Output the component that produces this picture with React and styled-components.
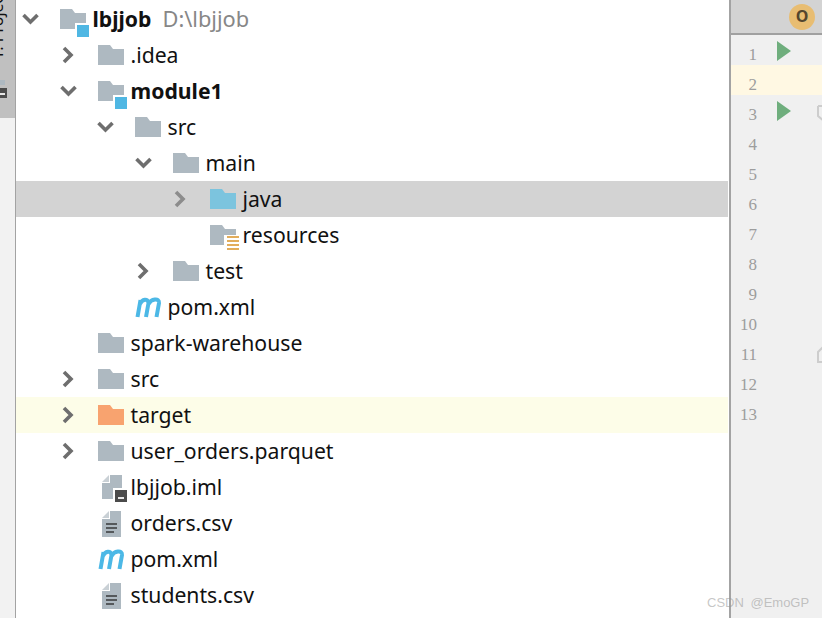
import styled, { createGlobalStyle } from "styled-components";

const GlobalStyle = createGlobalStyle`
  html, body {
    margin: 0;
    padding: 0;
    background: #fff;
  }
`;

const Page = styled.div`
  position: relative;
  display: grid;
  grid-template-columns: 16px 713px 93px;
  width: 822px;
  height: 618px;
  overflow: hidden;
  font-family: "Noto Sans", sans-serif;
`;

const SideBar = styled.div`
  position: relative;
  display: flex;
  flex-direction: column;
  border-right: 1px solid #a3a3a3;
  background: #f2f2f2;
  overflow: hidden;
`;
const SideTab = styled.div`
  height: 118px;
  background: #c0c0c0;
`;
const SideLabel = styled.span`
  position: absolute;
  left: -13px;
  top: -10px;
  writing-mode: vertical-rl;
  transform: rotate(180deg);
  font-size: 16px;
  line-height: 20px;
  color: #111;
  white-space: nowrap;
`;
const SideIcon = styled.svg`
  position: absolute;
  left: 0;
  top: 79px;
`;

const Tree = styled.div`
  padding-top: 1px;
  display: flex;
  flex-direction: column;
`;
const Row = styled.div`
  display: flex;
  align-items: center;
  height: 36px;
  flex: none;
  margin-right: 1px;
  padding-left: ${(p) => Math.round(p.$level * 37.5)}px;
  background: ${(p) => p.$bg || "transparent"};
`;
const ArrowSlot = styled.div`
  width: 44px;
  height: 100%;
  flex: none;
  display: flex;
  align-items: center;
  padding-left: 6px;
  box-sizing: border-box;
`;
const IconSlot = styled.div`
  position: relative;
  width: 26px;
  height: 26px;
  flex: none;
  margin-right: 6.5px;
`;
const Label = styled.span`
  font-size: 21.2px;
  line-height: 36px;
  color: #111;
  white-space: nowrap;
  font-weight: ${(p) => (p.$bold ? 700 : 400)};
`;
const Path = styled.span`
  margin-left: 11px;
  font-size: 21.8px;
  line-height: 36px;
  color: #878787;
  white-space: nowrap;
`;
const Glyph = styled.svg`
  position: absolute;
  left: 0;
  top: 0;
  overflow: visible;
`;

const Gutter = styled.div`
  display: flex;
  flex-direction: column;
  background: #f0f0f0;
  border-left: 2px solid #a3a3a3;
  box-sizing: border-box;
`;
const TabBar = styled.div`
  height: 33px;
  flex: none;
  display: flex;
  align-items: center;
  justify-content: flex-end;
  padding-right: 7px;
  background: #d3d3d3;
  border-bottom: 2px solid #a0a0a0;
`;
const Badge = styled.div`
  width: 26px;
  height: 26px;
  border-radius: 50%;
  background: #e8bd72;
  color: #54462e;
  font: 700 16px/25px "Noto Sans", sans-serif;
  text-align: center;
`;
const Line = styled.div`
  position: relative;
  height: 30px;
  flex: none;
  background: ${(p) => (p.$current ? "#fff8e3" : "transparent")};
`;
const LineNo = styled.span`
  position: absolute;
  right: 65px;
  top: 0;
  font: 17px/39px "Liberation Serif", serif;
  color: #9d9d9d;
`;
const Run = styled.svg`
  position: absolute;
  left: 46px;
  top: 6px;
`;
const Mark = styled.svg`
  position: absolute;
  left: 86px;
  top: 10px;
`;
const Watermark = styled.div`
  position: absolute;
  left: 707px;
  top: 594px;
  font: 13px/18px "Liberation Sans", sans-serif;
  color: rgba(150, 150, 150, 0.55);
  word-spacing: 3px;
  white-space: nowrap;
`;

function Arrow({ open, color = "#6e6e6e" }) {
  return open ? (
    <svg width="17" height="12" viewBox="0 0 17 12">
      <polyline points="1.5,2 8.5,9 15.5,2" fill="none" stroke={color} strokeWidth="3.6" />
    </svg>
  ) : (
    <svg width="30" height="18" viewBox="0 0 30 18">
      <polyline points="4,2 11,9 4,16" fill="none" stroke={color} strokeWidth="3.6" />
    </svg>
  );
}

function Folder({ color = "#aeb9c1", kind }) {
  return (
    <Glyph width="26" height="26" viewBox="0 0 26 26">
      <path d="M0 3 H12 L15 7 H26 V23 H0 Z" fill={color} />
      {kind === "module" && (
        <>
          <rect x="15" y="17" width="14" height="14" fill="#fff" />
          <rect x="17" y="19" width="12" height="12" fill="#4fb7e3" />
        </>
      )}
      {kind === "res" && (
        <>
          <rect x="14" y="13" width="16" height="16" fill="#fff" />
          <path d="M17 15 H29 M17 19 H29 M17 23 H29 M17 27 H29" stroke="#e2ad5c" strokeWidth="2.2" />
        </>
      )}
    </Glyph>
  );
}

function Maven() {
  return (
    <Glyph width="26" height="26" viewBox="0 0 26 26">
      <path
        d="M2.5 23 L5.5 6 M5 10 C7 5 13 4 13.5 9 L11 23 M13.5 10 C16 5 24.5 3.5 24 9 L21.5 23"
        fill="none"
        stroke="#4cb8e6"
        strokeWidth="4"
      />
    </Glyph>
  );
}

function FileDoc() {
  return (
    <Glyph width="26" height="26" viewBox="0 0 26 26">
      <path d="M4 8 L11 1 V8 Z" fill="#c9d0d5" />
      <path d="M4 9 H12 V1 H23 V27 H4 Z" fill="#aeb9c1" />
      <path d="M8 14 H19 M8 18 H19 M8 22 H16" stroke="#55595c" strokeWidth="2" />
    </Glyph>
  );
}

function FileIml() {
  return (
    <Glyph width="26" height="26" viewBox="0 0 26 26">
      <path d="M4 8 L11 1 V8 Z" fill="#c9d0d5" />
      <path d="M4 9 H12 V1 H24 V25 H4 Z" fill="#aeb9c1" />
      <rect x="15" y="14" width="14" height="14" fill="#fff" />
      <rect x="17" y="16" width="12" height="12" fill="#4b4b4b" />
      <rect x="20" y="23" width="6" height="2" fill="#e6e6e6" />
    </Glyph>
  );
}

const rows = [
  { level: 0, arrow: "open", icon: <Folder kind="module" />, text: "lbjjob", bold: true, path: "D:\\lbjjob" },
  { level: 1, arrow: "closed", icon: <Folder />, text: ".idea" },
  { level: 1, arrow: "open", icon: <Folder kind="module" />, text: "module1", bold: true },
  { level: 2, arrow: "open", icon: <Folder />, text: "src" },
  { level: 3, arrow: "open", icon: <Folder />, text: "main" },
  { level: 4, arrow: "closed", arrowColor: "#8c8c8c", icon: <Folder color="#7cc4de" />, text: "java", bg: "#d3d3d3" },
  { level: 4, icon: <Folder kind="res" />, text: "resources" },
  { level: 3, arrow: "closed", icon: <Folder />, text: "test" },
  { level: 2, icon: <Maven />, text: "pom.xml" },
  { level: 1, icon: <Folder />, text: "spark-warehouse" },
  { level: 1, arrow: "closed", icon: <Folder />, text: "src" },
  { level: 1, arrow: "closed", icon: <Folder color="#f8a36f" />, text: "target", bg: "#fdfde8" },
  { level: 1, arrow: "closed", icon: <Folder />, text: "user_orders.parquet" },
  { level: 1, icon: <FileIml />, text: "lbjjob.iml" },
  { level: 1, icon: <FileDoc />, text: "orders.csv" },
  { level: 1, icon: <Maven />, text: "pom.xml" },
  { level: 1, icon: <FileDoc />, text: "students.csv" },
];

const lineNumbers = [1, 2, 3, 4, 5, 6, 7, 8, 9, 10, 11, 12, 13];

function App() {
  return (
    <Page>
      <GlobalStyle />
      <SideBar>
        <SideTab />
        <SideLabel>1: Project</SideLabel>
        <SideIcon width="15" height="20" viewBox="0 0 15 20">
          <rect x="0" y="1" width="5" height="5" fill="#aeb9c1" />
          <rect x="0" y="9" width="7" height="10" fill="#4b4b4b" />
          <rect x="0" y="14" width="5" height="2" fill="#e6e6e6" />
        </SideIcon>
      </SideBar>
      <Tree>
        {rows.map((row, i) => (
          <Row key={i} $level={row.level} $bg={row.bg}>
            <ArrowSlot>
              {row.arrow && <Arrow open={row.arrow === "open"} color={row.arrowColor} />}
            </ArrowSlot>
            <IconSlot>{row.icon}</IconSlot>
            <Label $bold={row.bold}>{row.text}</Label>
            {row.path && <Path>{row.path}</Path>}
          </Row>
        ))}
      </Tree>
      <Gutter>
        <TabBar>
          <Badge>O</Badge>
        </TabBar>
        {lineNumbers.map((n) => (
          <Line key={n} $current={n === 2}>
            <LineNo>{n}</LineNo>
            {(n === 1 || n === 3) && (
              <Run width="14" height="20" viewBox="0 0 14 20">
                <path d="M0 0 L14 10 L0 20 Z" fill="#6fae7d" />
              </Run>
            )}
            {n === 3 && (
              <Mark width="20" height="18" viewBox="0 0 20 18">
                <path d="M1 1 H20 M1 1 V11 L8 17 H20" fill="none" stroke="#cdcdcd" strokeWidth="2" />
              </Mark>
            )}
            {n === 11 && (
              <Mark width="20" height="18" viewBox="0 0 20 18">
                <path d="M20 0 H8 L1 7 V17 H20" fill="none" stroke="#cdcdcd" strokeWidth="2" />
              </Mark>
            )}
          </Line>
        ))}
      </Gutter>
      <Watermark>CSDN @EmoGP</Watermark>
    </Page>
  );
}

export default App;
